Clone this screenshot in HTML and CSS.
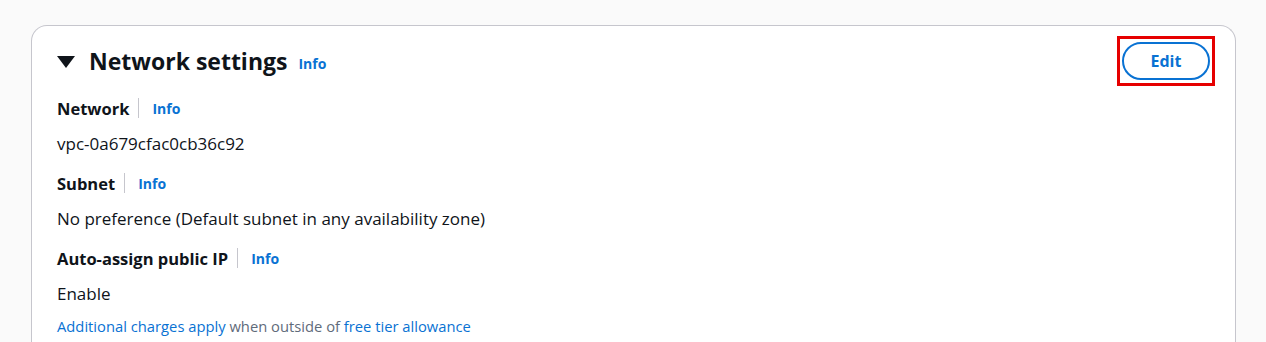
FILE: index.html
```html
<!DOCTYPE html>
<html lang="en">
  <head>
    <meta charset="utf-8" />
    <title>Network settings</title>
    <link rel="stylesheet" href="styles.css">
  </head>
  <body>
    <section class="panel">
      <div class="panel-header">
        <h2 class="panel-title">
          <svg class="caret" width="18" height="12" viewBox="0 0 18 12"><path d="M0 0h18L9 12z" fill="#0f141a"/></svg>
          Network settings
          <a class="info" href="#">Info</a>
        </h2>
        <div class="highlight">
          <button type="button" class="edit-btn">Edit</button>
        </div>
      </div>

      <div class="field">
        <div class="field-label">Network <span class="sep"></span><a class="info" href="#">Info</a></div>
        <div class="field-value">vpc-0a679cfac0cb36c92</div>
      </div>
      <div class="field">
        <div class="field-label">Subnet <span class="sep"></span><a class="info" href="#">Info</a></div>
        <div class="field-value">No preference (Default subnet in any availability zone)</div>
      </div>
      <div class="field">
        <div class="field-label">Auto-assign public IP <span class="sep"></span><a class="info" href="#">Info</a></div>
        <div class="field-value">Enable</div>
        <div class="note"><a href="#">Additional charges apply</a> when outside of <a href="#">free tier allowance</a></div>
      </div>
    </section>
  </body>
</html>
```

FILE: styles.css
```css
* {
  box-sizing: border-box;
}

body {
  margin: 0;
  padding: 25px 30px 0 31px;
  background: #fafafa;
  font-family: "Open Sans", "Noto Sans", sans-serif;
  color: #0f141a;
}

a {
  color: #0972d3;
  text-decoration: none;
}

.panel {
  background: #fff;
  border: 1px solid #c6c6cd;
  border-bottom: none;
  border-radius: 16px 16px 0 0;
  padding: 10px 20px 40px 25px;
  height: 340px;
  overflow: hidden;
}

.panel-header {
  display: flex;
  justify-content: space-between;
  align-items: center;
}

.panel-title {
  margin: 0;
  font-size: 23px;
  font-weight: 700;
  display: flex;
  align-items: center;
}

.caret {
  margin-right: 14px;
  margin-top: 1px;
}

.panel-title .info {
  font-size: 14px;
  margin-left: 11px;
  margin-top: 4px;
}

.info {
  font-weight: 700;
  font-size: 14px;
}

.highlight {
  border: 3px solid #e60000;
  padding: 3px 2px;
}

.edit-btn {
  display: block;
  font-family: inherit;
  font-size: 16px;
  font-weight: 700;
  color: #0972d3;
  background: #fff;
  border: 2px solid #0972d3;
  border-radius: 20px;
  width: 88px;
  height: 38px;
}

.field-label {
  display: flex;
  align-items: center;
  font-size: 16.5px;
  font-weight: 700;
  margin-top: 11px;
  height: 22px;
}

.field + .field .field-label {
  margin-top: 16px;
}

.sep {
  display: inline-block;
  width: 1px;
  height: 20px;
  background: #c6c6cd;
  margin: 0 13px 0 9px;
}

.field-value {
  font-size: 17px;
  line-height: 24px;
  margin-top: 13px;
}

.note {
  font-size: 14.75px;
  color: #5f6b7a;
  margin-top: 10px;
}
```
